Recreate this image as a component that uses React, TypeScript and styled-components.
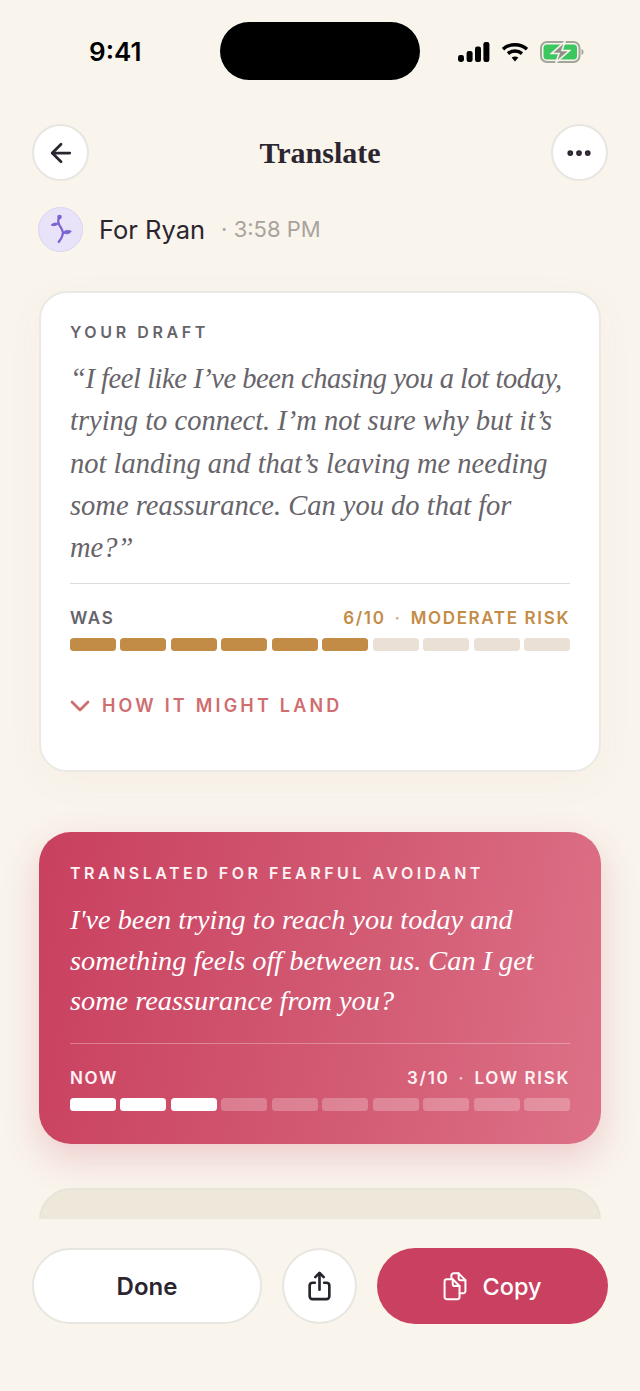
import React from 'react';
import styled, { createGlobalStyle } from 'styled-components';
import { ArrowLeft, ChevronDown, Ellipsis } from 'lucide-react';

const SEGMENTS = 10;

const GlobalStyle = createGlobalStyle`
  html, body {
    margin: 0;
    padding: 0;
    background: #f9f4ec;
  }
  * {
    box-sizing: border-box;
  }
`;

const Meter = ({ value, variant }: { value: number; variant: 'draft' | 'translated' }) => (
  <MeterRow>
    {Array.from({ length: SEGMENTS }).map((_, index) => (
      <Segment key={`segment-${index}`} $on={index < value} $variant={variant} />
    ))}
  </MeterRow>
);

const SignalIcon = () => (
  <svg width="32" height="20" viewBox="0 0 32 20" fill="#000">
    <rect x="0" y="13" width="6" height="7" rx="2.4" />
    <rect x="8.6" y="9" width="6" height="11" rx="2.2" />
    <rect x="17" y="4.5" width="6" height="15.5" rx="2.2" />
    <rect x="25.4" y="0" width="6" height="20" rx="2.2" />
  </svg>
);

const WifiIcon = () => (
  <svg width="26" height="20" viewBox="0 0 26 20" fill="none" stroke="#000" strokeWidth="3.4">
    <path d="M1 7.2C7.500 1.200 18.500 1.200 25 7.200" />
    <path d="M6 11.600c3.900-3.400 10.100-3.400 14 0" />
    <path d="M13 19.4 9.6 15.6c2-1.5 4.8-1.5 6.8 0Z" fill="#000" stroke="none" />
  </svg>
);

const BatteryIcon = () => (
  <svg width="44" height="22" viewBox="0 0 44 22" fill="none">
    <rect x="1" y="1" width="38.5" height="20" rx="6" stroke="#a3a59b" strokeWidth="2" />
    <rect x="3.5" y="3.5" width="33.5" height="15" rx="3.5" fill="#3cc65f" />
    <path d="M41.5 8v6c1.4-.5 2-1.6 2-3s-.6-2.5-2-3Z" fill="#a3a59b" />
    <path d="M25 .5 11.5 12.5h7.5L16 21.5 29.5 9.500h-7.500Z" fill="#8f918a" stroke="#f9f4ec" strokeWidth="1.6" />
  </svg>
);

const SproutIcon = () => (
  <svg width="26" height="30" viewBox="0 0 26 30" fill="none" stroke="#7d63d2" strokeWidth="2.2" strokeLinecap="round">
    <path d="M11.5 3c-1.6 2.500-1.600 5 -.4 7.500 1.100 2.400 3.200 4.500 3.900 8-.2 3.400-1.800 6.500-4.300 9.500" />
    <circle cx="11.5" cy="3" r="2.3" fill="#7d63d2" stroke="none" />
    <path d="M10.500 9.600C8 8.600 5.500 8.900 3.200 11c2.700 1.200 5.200.8 7.300-1.400Z" fill="#7d63d2" strokeWidth="1" />
    <path d="M14.800 18.600c2-2.400 5-2.800 8.400-1.400-1.800 2.900-4.900 3.400-8.400 1.400Z" fill="#7d63d2" strokeWidth="1" />
  </svg>
);

const ShareIcon = () => (
  <svg width="25" height="30" viewBox="0 0 26 32" fill="none" stroke="#26212b" strokeWidth="2.8" strokeLinecap="round" strokeLinejoin="round">
    <path d="M8 12.500H5.500a3 3 0 0 0-3 3V27a3 3 0 0 0 3 3h15a3 3 0 0 0 3-3V15.500a3 3 0 0 0-3-3H18" />
    <path d="M13 20V2.500" />
    <path d="M8.500 6.500 13 2l4.500 4.500" />
  </svg>
);

const CopyIcon = () => (
  <svg width="24" height="29" viewBox="0 0 26 32" fill="none" stroke="#fff" strokeWidth="2.2" strokeLinejoin="round" strokeLinecap="round">
    <path d="M9 7V4a2.500 2.500 0 0 1 2.500-2.500h5.500l7.500 7.500v12a2.500 2.500 0 0 1-2.500 2.500H18" />
    <path d="M17 1.500V7a2 2 0 0 0 2 2h5.500" />
    <path d="M4 8h6.500l7.500 7.500V27.500a2.500 2.500 0 0 1-2.500 2.500H4a2.500 2.500 0 0 1-2.500-2.500V10.500A2.500 2.500 0 0 1 4 8Z" />
    <path d="M10.500 8v5.500a2 2 0 0 0 2 2H18" />
  </svg>
);

const App = () => (
  <>
    <GlobalStyle />
    <Page>
      <StatusBar>
        <Clock>9:41</Clock>
        <Island />
        <StatusIcons>
          <SignalIcon />
          <WifiIcon />
          <BatteryIcon />
        </StatusIcons>
      </StatusBar>

      <Header>
        <RoundButton aria-label="Back">
          <ArrowLeft size={30} color="#2b2530" strokeWidth={2.2} />
        </RoundButton>
        <Title>Translate</Title>
        <RoundButton aria-label="More">
          <Ellipsis size={30} color="#2b2530" strokeWidth={2.6} />
        </RoundButton>
      </Header>

      <Recipient>
        <Avatar>
          <SproutIcon />
        </Avatar>
        <RecipientName>For Ryan</RecipientName>
        <Time>· 3:58 PM</Time>
      </Recipient>

      <Scroll>
        <DraftCard>
          <DraftLabel>YOUR DRAFT</DraftLabel>
          <Quote>
            <TightLine>“I feel like I’ve been chasing you a lot today,</TightLine>
            <br />
            trying to connect. I’m not sure why but it’s
            <br />
            not landing and that’s leaving me needing
            <br />
            some reassurance. Can you do that for
            <br />
            me?”
          </Quote>
          <Divider />
          <ScoreRow>
            <ScoreName>WAS</ScoreName>
            <ScoreValue $color="#c38c46">
              6/10<Dot>·</Dot>MODERATE RISK
            </ScoreValue>
          </ScoreRow>
          <Meter value={6} variant="draft" />
          <Disclosure>
            <DisclosureChevron size={32} strokeWidth={2} />
            <span>HOW IT MIGHT LAND</span>
          </Disclosure>
        </DraftCard>

        <TranslatedCard>
          <TranslatedLabel>TRANSLATED FOR FEARFUL AVOIDANT</TranslatedLabel>
          <TranslatedText>
            I've been trying to reach you today and
            <br />
            something feels off between us. Can I get
            <br />
            some reassurance from you?
          </TranslatedText>
          <TranslatedDivider />
          <ScoreRow>
            <ScoreName $light>NOW</ScoreName>
            <ScoreValue $color="#fdf3f4">
              3/10<Dot>·</Dot>LOW RISK
            </ScoreValue>
          </ScoreRow>
          <Meter value={3} variant="translated" />
        </TranslatedCard>

        <PeekCard />
      </Scroll>

      <Footer>
        <DoneButton>Done</DoneButton>
        <ShareButton aria-label="Share">
          <ShareIcon />
        </ShareButton>
        <CopyButton>
          <CopyIcon />
          Copy
        </CopyButton>
      </Footer>
    </Page>
  </>
);

export default App;

const Page = styled.div`
  width: 640px;
  height: 1391px;
  display: flex;
  flex-direction: column;
  overflow: hidden;
  background: #f9f4ec;
  font-family: Inter, 'Liberation Sans', sans-serif;
  color: #2b2530;
`;

const StatusBar = styled.div`
  height: 124px;
  padding: 22px 56px 0 89px;
  display: flex;
  align-items: flex-start;
  flex-shrink: 0;
`;

const Clock = styled.div`
  width: 131px;
  font-size: 26px;
  line-height: 60px;
  font-weight: 600;
  color: #000;
`;

const Island = styled.div`
  width: 200px;
  height: 58px;
  border-radius: 29px;
  background: #000;
`;

const StatusIcons = styled.div`
  flex: 1;
  height: 60px;
  display: flex;
  align-items: center;
  justify-content: flex-end;
  gap: 12px;
`;

const Header = styled.header`
  height: 57px;
  padding: 0 32px;
  display: flex;
  align-items: center;
  justify-content: space-between;
  flex-shrink: 0;
`;

const RoundButton = styled.button`
  width: 57px;
  height: 57px;
  padding: 0;
  display: flex;
  align-items: center;
  justify-content: center;
  border-radius: 50%;
  border: 2px solid #e8e6e1;
  background: #fff;
`;

const Title = styled.h1`
  margin: 0;
  font-family: 'Liberation Serif', serif;
  font-size: 30px;
  font-weight: 700;
  color: #2b2530;
`;

const Recipient = styled.div`
  height: 44px;
  margin-top: 26px;
  padding-left: 38px;
  display: flex;
  align-items: center;
  flex-shrink: 0;
`;

const Avatar = styled.div`
  width: 45px;
  height: 45px;
  display: flex;
  align-items: center;
  justify-content: center;
  border-radius: 50%;
  background: #e9e3fa;
  border: 1.5px solid #dcd3f3;
`;

const RecipientName = styled.span`
  margin-left: 16px;
  font-size: 25.5px;
  color: #2b2530;
`;

const Time = styled.span`
  margin-left: 16px;
  font-size: 22px;
  color: #aaa39c;
`;

const Scroll = styled.main`
  flex: 1;
  min-height: 0;
  padding: 40px 39px 0;
  overflow: hidden;
  display: flex;
  flex-direction: column;
`;

const DraftCard = styled.section`
  height: 481px;
  padding: 29px 29px 0;
  flex-shrink: 0;
  border-radius: 28px;
  background: #fff;
  border: 2px solid #ebe9e4;
  box-shadow: 0 10px 40px rgba(190, 140, 90, 0.04);
`;

const DraftLabel = styled.div`
  font-size: 16px;
  line-height: 20px;
  font-weight: 600;
  letter-spacing: 3.6px;
  color: #66646a;
`;

const Quote = styled.p`
  margin: 16px 0 0;
  font-family: 'Liberation Serif', serif;
  font-style: italic;
  font-size: 28.5px;
  line-height: 42.3px;
  white-space: nowrap;
  color: #67646a;
`;

const TightLine = styled.span`
  letter-spacing: -0.45px;
`;

const Divider = styled.div`
  height: 1px;
  margin-top: 13.5px;
  background: #dfdcd8;
`;

const ScoreRow = styled.div`
  margin-top: 24px;
  height: 20px;
  display: flex;
  align-items: center;
  justify-content: space-between;
`;

const ScoreName = styled.span<{ $light?: boolean }>`
  font-size: 17px;
  font-weight: 600;
  letter-spacing: 1.65px;
  color: ${(p) => (p.$light ? '#fdf3f4' : '#66646a')};
`;

const ScoreValue = styled.span<{ $color: string }>`
  font-size: 17px;
  font-weight: 600;
  letter-spacing: 1.65px;
  color: ${(p) => p.$color};
`;

const Dot = styled.span`
  margin: 0 9px;
  opacity: 0.7;
`;

const MeterRow = styled.div`
  margin-top: 10px;
  display: grid;
  grid-template-columns: repeat(${SEGMENTS}, 1fr);
  gap: 4.5px;
`;

const Segment = styled.div<{ $on: boolean; $variant: 'draft' | 'translated' }>`
  height: 13px;
  border-radius: 3.5px;
  background: ${(p) => {
    if (p.$variant === 'draft') return p.$on ? '#c38c46' : '#eae0d5';
    return p.$on ? '#ffffff' : 'rgba(255, 255, 255, 0.25)';
  }};
`;

const Disclosure = styled.div`
  margin-top: 43px;
  display: flex;
  align-items: center;
  gap: 6px;
  font-size: 18px;
  line-height: 24px;
  font-weight: 600;
  letter-spacing: 3.2px;
  color: #cf6d6f;
`;

const DisclosureChevron = styled(ChevronDown)`
  margin: -4px 0 -4px -6px;
`;

const TranslatedCard = styled.section`
  height: 312px;
  margin-top: 60px;
  padding: 31px 31px 0;
  flex-shrink: 0;
  border-radius: 32px;
  color: #fff;
  background: linear-gradient(100deg, #c9405f 0%, #d25a73 55%, #dd7187 100%);
  box-shadow: 0 14px 36px rgba(201, 64, 95, 0.22);
`;

const TranslatedLabel = styled.div`
  font-size: 16px;
  line-height: 20px;
  font-weight: 600;
  letter-spacing: 3.5px;
  color: #fdf3f4;
`;

const TranslatedText = styled.p`
  margin: 17px 0 0;
  font-family: 'Liberation Serif', serif;
  font-style: italic;
  font-size: 28.3px;
  line-height: 40.5px;
  white-space: nowrap;
  color: #fff;
`;

const TranslatedDivider = styled.div`
  height: 1px;
  margin-top: 21px;
  background: rgba(255, 255, 255, 0.3);
`;

const PeekCard = styled.div`
  height: 90px;
  margin-top: 44px;
  flex-shrink: 0;
  border-radius: 32px 32px 0 0;
  background: #eee8db;
  border: 2px solid #e9e4d8;
`;

const Footer = styled.footer`
  height: 172px;
  padding: 29px 32px 0;
  display: grid;
  grid-template-columns: 230px 75px 231px;
  grid-template-rows: 76px;
  column-gap: 20px;
  flex-shrink: 0;
  background: #f9f4ec;
`;

const DoneButton = styled.button`
  border-radius: 38px;
  border: 2px solid #e8e6e1;
  background: #fff;
  font-family: inherit;
  font-size: 24px;
  font-weight: 600;
  color: #2b2530;
`;

const ShareButton = styled.button`
  padding: 0;
  display: flex;
  align-items: center;
  justify-content: center;
  border-radius: 50%;
  border: 2px solid #e8e6e1;
  background: #fff;
`;

const CopyButton = styled.button`
  display: flex;
  align-items: center;
  justify-content: center;
  gap: 15px;
  border: none;
  border-radius: 38px;
  background: #c94060;
  font-family: inherit;
  font-size: 23.5px;
  font-weight: 500;
  color: #fff;
`;
